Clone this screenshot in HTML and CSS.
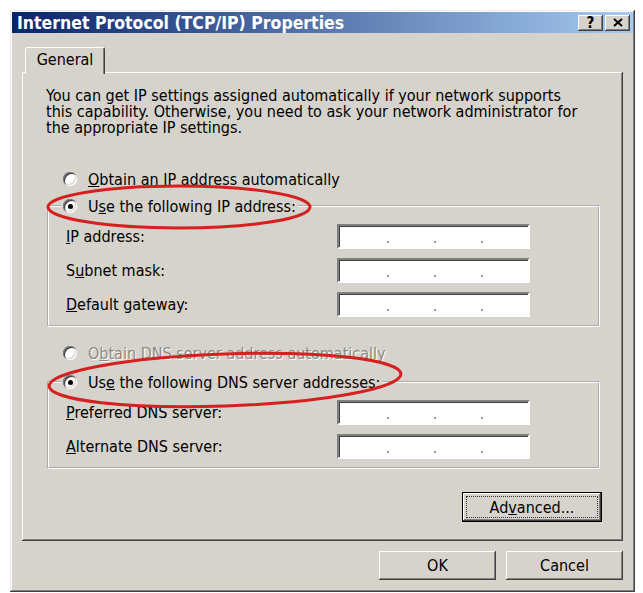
FILE: index.html
```html
<!DOCTYPE html>
<html lang="en">
<head>
    <meta charset="UTF-8">
    <title>Internet Protocol (TCP/IP) Properties</title>
    <link rel="stylesheet" href="styles.css">
</head>
<body>

    <div class="window">
        <div class="titlebar">
            <span class="title">Internet Protocol (TCP/IP) Properties</span>
            <div class="title-buttons">
                <span class="tbtn">?</span>
                <span class="tbtn">
                    <svg width="10" height="9" viewBox="0 0 10 9"><path d="M1 1 L9 8 M9 1 L1 8" stroke="#000" stroke-width="2"/></svg>
                </span>
            </div>
        </div>

        <div class="dialog-body">
            <div class="tabs">
                <div class="tab">General</div>
            </div>

            <div class="panel">
                <p class="intro">You can get IP settings assigned automatically if your network supports<br>
                this capability. Otherwise, you need to ask your network administrator for<br>
                the appropriate IP settings.</p>

                <div class="option first">
                    <span class="radio"></span>
                    <span><u>O</u>btain an IP address automatically</span>
                </div>

                <fieldset class="group">
                    <legend class="option">
                        <span class="radio checked"></span>
                        <span>U<u>s</u>e the following IP address:</span>
                    </legend>
                    <div class="fields">
                        <label><u>I</u>P address:</label>
                        <div class="ip"><i></i><i></i><i></i></div>
                        <label>S<u>u</u>bnet mask:</label>
                        <div class="ip"><i></i><i></i><i></i></div>
                        <label><u>D</u>efault gateway:</label>
                        <div class="ip"><i></i><i></i><i></i></div>
                    </div>
                </fieldset>

                <div class="option second disabled">
                    <span class="radio"></span>
                    <span>O<u>b</u>tain DNS server address automatically</span>
                </div>

                <fieldset class="group">
                    <legend class="option">
                        <span class="radio checked"></span>
                        <span>Us<u>e</u> the following DNS server addresses:</span>
                    </legend>
                    <div class="fields">
                        <label><u>P</u>referred DNS server:</label>
                        <div class="ip"><i></i><i></i><i></i></div>
                        <label><u>A</u>lternate DNS server:</label>
                        <div class="ip"><i></i><i></i><i></i></div>
                    </div>
                </fieldset>

                <div class="advanced-row">
                    <button class="btn advanced">Ad<u>v</u>anced...</button>
                </div>
            </div>

            <div class="actions">
                <button class="btn ok">OK</button>
                <button class="btn cancel">Cancel</button>
            </div>
        </div>
    </div>

    <!-- red marks drawn over the screenshot -->
    <svg class="marks" width="643" height="593" viewBox="0 0 643 593">
        <ellipse cx="179" cy="207" rx="131" ry="21" fill="none" stroke="#d61f1f" stroke-width="3"/>
        <ellipse cx="225" cy="380" rx="176" ry="26" fill="none" stroke="#d61f1f" stroke-width="3" transform="rotate(-2 225 380)"/>
    </svg>

</body>
</html>
```

FILE: styles.css
```css
body
{
    margin: 0;
    background: white;
    font-family: "DejaVu Sans Condensed", "Liberation Sans", sans-serif;
    font-size: 16px;
    color: #000;
}
.window
{
    margin: 10px 0 0 10px;
    width: 625px;
    box-sizing: border-box;
    background: #d6d3cc;
    padding: 2px;
    box-shadow: inset -1px -1px #404040, inset 1px 1px #eeece8, inset -2px -2px #808080, inset 2px 2px #fff;
}
.titlebar
{
    height: 21px;
    background: linear-gradient(to right, #0a246a, #a6caf0);
    display: flex;
    align-items: center;
    justify-content: space-between;
    padding: 0 3px 0 5px;
}
.title
{
    color: white;
    font-weight: bold;
    font-size: 17.5px;
}
.title-buttons
{
    display: flex;
    gap: 2px;
}
.tbtn
{
    width: 25px;
    height: 16px;
    background: #d6d3cc;
    box-shadow: inset -1px -1px #404040, inset 1px 1px #fff, inset -2px -2px #808080;
    display: flex;
    align-items: center;
    justify-content: center;
    font-weight: bold;
    font-size: 15px;
}
.dialog-body
{
    padding: 14px 10px 10px 10px;
}
.tabs
{
    display: flex;
    padding-left: 3px;
}
.tab
{
    position: relative;
    z-index: 1;
    width: 80px;
    height: 27px;
    box-sizing: border-box;
    margin-bottom: -2px;
    background: #d6d3cc;
    border-radius: 2px 2px 0 0;
    box-shadow: inset 1px 1px #fff, inset -1px 0 #404040, inset -2px 0 #808080;
    display: flex;
    align-items: center;
    justify-content: center;
    padding-bottom: 2px;
}
.panel
{
    padding: 16px 23px 19px 24px;
    box-shadow: inset -1px -1px #404040, inset 1px 1px #fff, inset -2px -2px #808080;
}
.intro
{
    margin: 0;
    line-height: 16px;
}
.option
{
    display: flex;
    align-items: center;
    gap: 11px;
    height: 20px;
}
.option.first
{
    margin: 33px 0 7px 17px;
}
.option.second
{
    margin: 16px 0 9px 17px;
}
.disabled
{
    color: #8c8a86;
    text-shadow: 1px 1px #fff;
}
.radio
{
    width: 14px;
    height: 14px;
    border-radius: 50%;
    background: white;
    box-shadow: inset 1px 1px #808080, inset 2px 2px #404040, inset -1px -1px #fff, inset -2px -2px #d6d3cc;
    display: flex;
    align-items: center;
    justify-content: center;
    flex-shrink: 0;
}
.radio.checked::after
{
    content: "";
    width: 5px;
    height: 5px;
    border-radius: 50%;
    background: #000;
}
.group
{
    margin: 0 0 0 1px;
    padding: 0;
    border: 2px groove #fff;
}
.group legend
{
    margin-left: 12px;
    padding: 0 2px;
}
.fields
{
    display: grid;
    grid-template-columns: 271px 193px;
    row-gap: 9px;
    align-items: center;
    padding: 8px 0 8px 17px;
}
.ip
{
    height: 25px;
    box-sizing: border-box;
    background: white;
    border: 2px solid;
    border-color: #808080 #fff #fff #808080;
    box-shadow: inset 1px 1px #404040;
    display: flex;
    padding-left: 3px;
}
.ip i
{
    width: 47px;
    display: flex;
    justify-content: flex-end;
    align-items: flex-end;
    padding-bottom: 4px;
}
.ip i::after
{
    content: "";
    width: 2px;
    height: 2px;
    background: #9a9a9a;
}
.advanced-row
{
    display: flex;
    justify-content: flex-end;
    margin: 23px -2px 0 0;
}
.btn
{
    font-family: inherit;
    font-size: 16px;
    background: #d6d3cc;
    border: none;
    padding: 0;
    box-shadow: inset -1px -1px #404040, inset 1px 1px #fff, inset -2px -2px #808080;
}
.advanced
{
    width: 140px;
    height: 30px;
    border: 1px solid #000;
    outline: 1px dotted #333;
    outline-offset: -5px;
}
.actions
{
    display: flex;
    justify-content: flex-end;
    gap: 10px;
    margin-top: 10px;
}
.ok, .cancel
{
    width: 117px;
    height: 29px;
}
.marks
{
    position: absolute;
    top: 0;
    left: 0;
    pointer-events: none;
}
```
